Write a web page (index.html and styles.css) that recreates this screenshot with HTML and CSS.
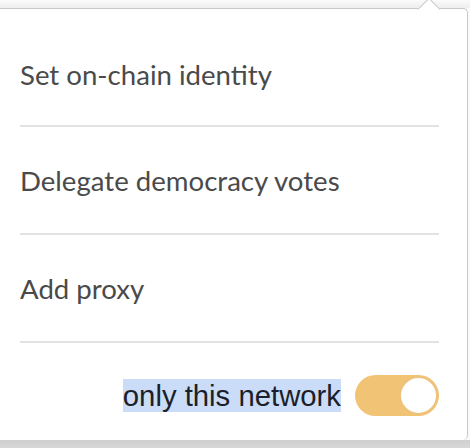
FILE: index.html
```html
<!DOCTYPE html>
<html>
<head>
<meta charset="utf-8">
<link rel="stylesheet" href="styles.css">
</head>
<body>
<div class="topbar"></div>
<div class="popup">
  <div class="arrow"></div>
  <div class="item first">Set on-chain identity</div>
  <div class="item">Delegate democracy votes</div>
  <div class="item">Add proxy</div>
  <div class="footer">
    <span class="label">only this network</span>
    <span class="toggle"><span class="knob"></span></span>
  </div>
</div>
<div class="bottombar"></div>
</body>
</html>
```
FILE: styles.css
```css
html, body {
  margin: 0;
  padding: 0;
  width: 470px;
  height: 448px;
  overflow: hidden;
  background: #fafafa;
}
.topbar {
  height: 8px;
  background: linear-gradient(#fbfbfb, #eeeeee);
}
.popup {
  position: relative;
  width: 468px;
  height: 432px;
  background: #fff;
  border-top: 1px solid #c8c8c8;
  border-right: 1px solid #c8c8c8;
  border-top-right-radius: 5px;
  border-bottom-right-radius: 5px;
  box-sizing: border-box;
  display: flex;
  flex-direction: column;
}
.arrow {
  position: absolute;
  top: -8px;
  left: 421px;
  width: 15px;
  height: 15px;
  background: #fff;
  border-top: 1px solid #c8c8c8;
  border-left: 1px solid #c8c8c8;
  transform: rotate(45deg);
}
.item {
  margin: 0 28px 0 20px;
  height: 108px;
  display: flex;
  align-items: center;
  border-bottom: 2px solid #e2e2e2;
  box-sizing: border-box;
  font-family: Lato, sans-serif;
  font-size: 27.6px;
  color: #4a4a4a;
}
.item.first {
  height: 118px;
  padding-top: 15px;
}
.footer {
  flex: 1;
  display: flex;
  align-items: center;
  justify-content: flex-end;
  padding: 8px 28px 0 0;
  gap: 14px;
}
.label {
  font-family: "Liberation Sans", Arial, sans-serif;
  font-size: 29.3px;
  color: #1c1f2a;
  background: #cadcf7;
  line-height: 33px;
}
.toggle {
  width: 84px;
  height: 41px;
  border-radius: 21px;
  background: #f1c374;
  display: flex;
  align-items: center;
  justify-content: flex-end;
  padding-right: 1px;
  box-sizing: border-box;
}
.knob {
  width: 39px;
  height: 39px;
  border-radius: 50%;
  background: #fff;
  border: 2px solid #eec27a;
  box-sizing: border-box;
}
.bottombar {
  height: 8px;
  background: linear-gradient(#cfcfcf, #d8d8d8);
}
```
